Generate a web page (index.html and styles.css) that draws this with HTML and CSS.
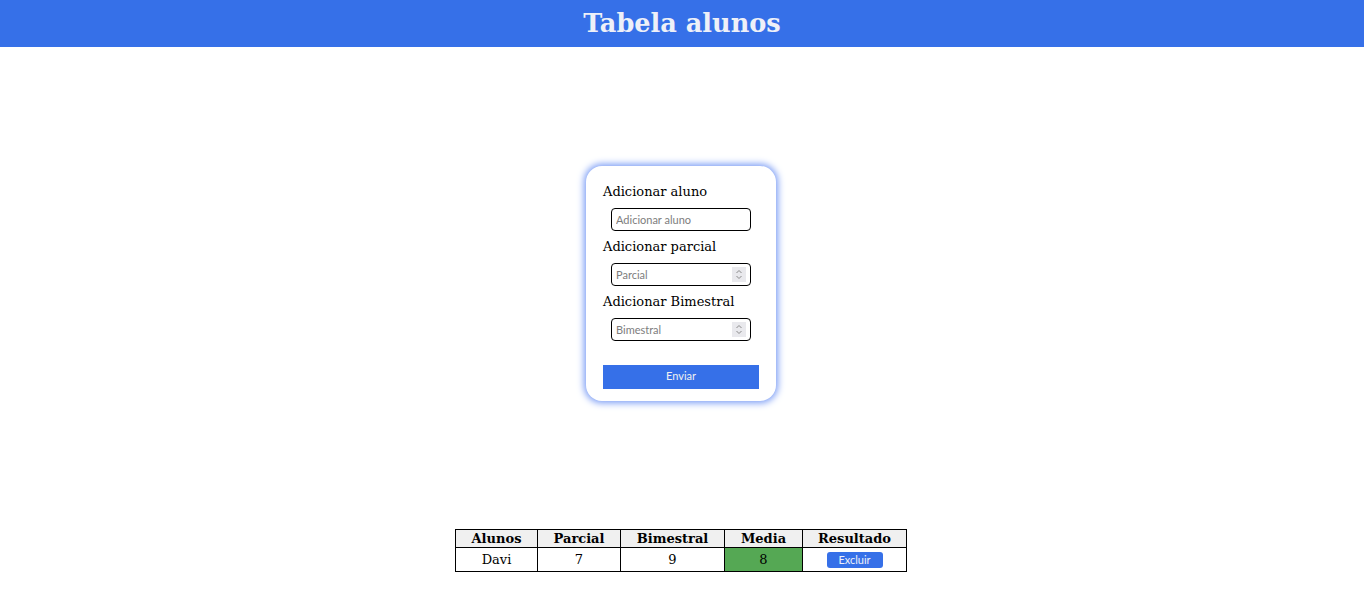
FILE: index.html
```html
<!DOCTYPE html>
<html lang="pt">
<head>
<meta charset="utf-8">
<title>Tabela alunos</title>
<link rel="stylesheet" href="styles.css">
</head>
<body>
<header class="topbar">
  <h1 class="title">Tabela alunos</h1>
</header>
<main class="main">
  <form class="card">
    <label class="label" for="aluno">Adicionar aluno</label>
    <span class="wrap"><input class="field" id="aluno" type="text" placeholder="Adicionar aluno"></span>
    <label class="label" for="parcial">Adicionar parcial</label>
    <span class="wrap">
      <input class="field" id="parcial" type="number" placeholder="Parcial">
      <svg class="spin" width="14" height="15" viewBox="0 0 14 15" aria-hidden="true"><rect width="14" height="15" fill="#e9e9ed"/><path d="M4.5 6 L7 3.5 L9.5 6 M4.5 9 L7 11.5 L9.5 9" fill="none" stroke="#8a8a8a" stroke-width="1"/></svg>
    </span>
    <label class="label" for="bimestral">Adicionar Bimestral</label>
    <span class="wrap">
      <input class="field" id="bimestral" type="number" placeholder="Bimestral">
      <svg class="spin" width="14" height="15" viewBox="0 0 14 15" aria-hidden="true"><rect width="14" height="15" fill="#e9e9ed"/><path d="M4.5 6 L7 3.5 L9.5 6 M4.5 9 L7 11.5 L9.5 9" fill="none" stroke="#8a8a8a" stroke-width="1"/></svg>
    </span>
    <button class="send" type="button">Enviar</button>
  </form>
  <table class="grades">
    <thead>
      <tr>
        <th class="c1">Alunos</th>
        <th class="c2">Parcial</th>
        <th class="c3">Bimestral</th>
        <th class="c4">Media</th>
        <th class="c5">Resultado</th>
      </tr>
    </thead>
    <tbody>
      <tr>
        <td>Davi</td>
        <td>7</td>
        <td>9</td>
        <td class="media">8</td>
        <td><button class="del" type="button">Excluir</button></td>
      </tr>
    </tbody>
  </table>
</main>
</body>
</html>
```
FILE: styles.css
```css
* { box-sizing: border-box; }
html, body { margin: 0; padding: 0; }
body {
  font-family: "DejaVu Serif", serif;
  background: #fff;
  color: #000;
}
.topbar {
  height: 47px;
  background: #3670e8;
  display: flex;
  align-items: center;
  justify-content: center;
}
.title {
  margin: 0;
  font-size: 25.6px;
  font-weight: bold;
  color: #eef0f8;
  line-height: 1;
}
.main {
  display: flex;
  flex-direction: column;
  align-items: center;
  padding-right: 2px;
}
.card {
  margin-top: 119px;
  width: 190px;
  height: 235px;
  padding: 18px 17px 0 17px;
  border-radius: 16px;
  background: #fff;
  box-shadow: 0 0 7px 2px #7a9cf5;
  display: flex;
  flex-direction: column;
}
.label {
  font-size: 13px;
  line-height: 16px;
  height: 16px;
  margin: 0 0 8px 0;
}
.wrap {
  position: relative;
  display: block;
  width: 140px;
  height: 23px;
  margin: 0 0 8px 8px;
}
.field {
  display: block;
  width: 140px;
  height: 23px;
  margin: 0;
  border: 1px solid #000;
  border-radius: 4px;
  padding: 0 4px;
  font-family: "Lato", "Open Sans", sans-serif;
  font-size: 11px;
  color: #000;
  -moz-appearance: textfield;
}
.field::placeholder { color: #7d7d7d; }
.field::-webkit-inner-spin-button,
.field::-webkit-outer-spin-button {
  -webkit-appearance: none;
  margin: 0;
}
.spin {
  position: absolute;
  right: 5px;
  top: 4px;
  display: block;
}
.send {
  margin-top: 16px;
  width: 156px;
  height: 24px;
  border: 0;
  background: #3670e8;
  color: #f0f0f0;
  font-family: "Lato", "Open Sans", sans-serif;
  font-size: 11px;
  line-height: 20px;
  padding: 0 0 3px 0;
}
.grades {
  margin-top: 128px;
  border-collapse: collapse;
  font-size: 13px;
}
.grades th, .grades td {
  border: 1px solid #000;
  text-align: center;
  padding: 0;
}
.grades th {
  background: #f0f0f0;
  height: 18px;
  line-height: 16px;
}
.grades td {
  height: 24px;
}
.c1 { width: 82px; }
.c2 { width: 83px; }
.c3 { width: 104px; }
.c4 { width: 78px; }
.c5 { width: 104px; }
.media { background: #55a854; }
.del {
  width: 56px;
  height: 16px;
  border: 0;
  border-radius: 3px;
  background: #3670e8;
  color: #eef0f8;
  font-family: "Lato", "Open Sans", sans-serif;
  font-size: 11px;
  padding: 0;
  vertical-align: middle;
}
```
